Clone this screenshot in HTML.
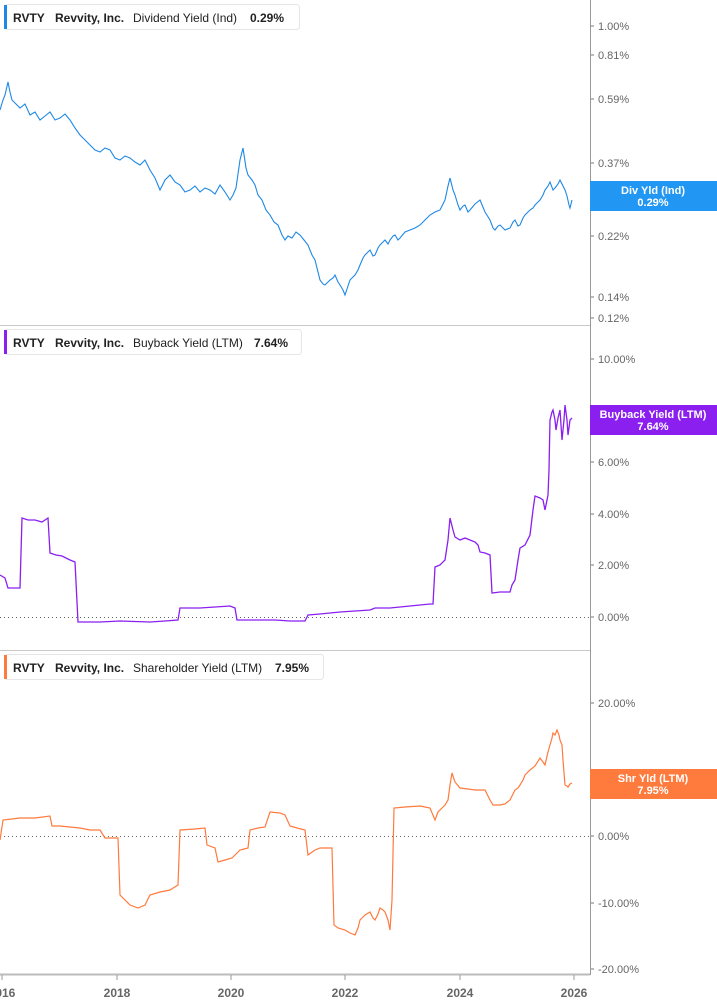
<!DOCTYPE html>
<html><head><meta charset="utf-8"><style>
html,body{margin:0;padding:0;background:#fff;}
svg{display:block;font-family:"Liberation Sans",sans-serif;}
</style></head><body>
<svg width="717" height="1005" viewBox="0 0 717 1005" xmlns="http://www.w3.org/2000/svg">
<rect width="717" height="1005" fill="#fff"/>
<line x1="0" y1="325.5" x2="590" y2="325.5" stroke="#c8c8c8"/>
<line x1="0" y1="650.5" x2="590" y2="650.5" stroke="#c8c8c8"/>
<line x1="590.5" y1="0" x2="590.5" y2="975" stroke="#999"/>
<line x1="0" y1="974.5" x2="590" y2="974.5" stroke="#bbb" stroke-width="2"/>
<g stroke="#999">
<line x1="2" y1="975" x2="2" y2="980"/><line x1="117" y1="975" x2="117" y2="980"/><line x1="231" y1="975" x2="231" y2="980"/><line x1="345" y1="975" x2="345" y2="980"/><line x1="460" y1="975" x2="460" y2="980"/><line x1="574" y1="975" x2="574" y2="980"/>
</g>
<g font-size="12" font-weight="bold" fill="#666" text-anchor="middle">
<text x="2" y="997">2016</text><text x="117" y="997">2018</text><text x="231" y="997">2020</text><text x="345" y="997">2022</text><text x="460" y="997">2024</text><text x="574" y="997">2026</text>
</g>
<line x1="0" y1="617.5" x2="590" y2="617.5" stroke="#666" stroke-dasharray="1,3"/>
<line x1="0" y1="836.5" x2="590" y2="836.5" stroke="#666" stroke-dasharray="1,3"/>
<g stroke="#777">
<line x1="591" y1="26" x2="594" y2="26"/><line x1="591" y1="55" x2="594" y2="55"/><line x1="591" y1="99" x2="594" y2="99"/><line x1="591" y1="163" x2="594" y2="163"/><line x1="591" y1="236" x2="594" y2="236"/><line x1="591" y1="297" x2="594" y2="297"/><line x1="591" y1="318" x2="594" y2="318"/>
<line x1="591" y1="359" x2="594" y2="359"/><line x1="591" y1="462" x2="594" y2="462"/><line x1="591" y1="514" x2="594" y2="514"/><line x1="591" y1="565" x2="594" y2="565"/><line x1="591" y1="617" x2="594" y2="617"/>
<line x1="591" y1="703" x2="594" y2="703"/><line x1="591" y1="836" x2="594" y2="836"/><line x1="591" y1="903" x2="594" y2="903"/><line x1="591" y1="969" x2="594" y2="969"/>
</g>
<g font-size="11" fill="#666">
<text x="598" y="30">1.00%</text><text x="598" y="59">0.81%</text><text x="598" y="103">0.59%</text><text x="598" y="167">0.37%</text><text x="598" y="240">0.22%</text><text x="598" y="301">0.14%</text><text x="598" y="322">0.12%</text>
<text x="598" y="363">10.00%</text><text x="598" y="466">6.00%</text><text x="598" y="518">4.00%</text><text x="598" y="569">2.00%</text><text x="598" y="621">0.00%</text>
<text x="598" y="707">20.00%</text><text x="598" y="840">0.00%</text><text x="598" y="907">-10.00%</text><text x="598" y="973">-20.00%</text>
</g>
<polyline fill="none" stroke="#1e88e5" stroke-width="1.1" points="0,110 3,100 5,95 8,82 10,92 12,100 16,104 20,108 25,104 30,115 35,112 40,120 45,116 50,112 55,120 60,118 65,114 70,120 75,128 80,135 85,140 90,145 95,150 100,152 105,148 110,150 115,158 120,160 125,156 130,158 135,162 140,165 145,160 150,170 155,178 160,190 165,180 170,175 175,182 180,185 185,192 190,190 195,186 200,192 205,188 210,190 215,194 220,185 225,192 230,200 233,195 236,188 240,160 243,148 246,168 248,175 252,180 255,185 258,195 262,200 266,210 270,215 274,222 278,225 282,235 285,240 288,236 292,238 296,232 300,235 304,240 308,245 312,255 315,260 318,272 320,280 323,284 325,285 328,282 330,280 333,278 335,275 338,282 340,285 343,290 345,295 348,286 350,280 353,277 355,275 358,270 360,265 363,258 365,255 368,252 370,250 373,256 375,255 378,248 380,245 383,242 385,240 388,244 390,240 393,236 395,235 398,240 400,238 405,232 410,230 415,228 420,225 425,220 430,215 435,212 440,210 443,204 445,200 448,186 450,178 453,190 455,195 458,205 460,210 463,206 465,205 468,212 470,210 475,204 480,200 485,212 490,220 493,228 495,230 498,226 500,225 505,230 510,228 513,222 515,220 518,226 520,225 523,218 525,215 528,212 530,210 533,208 535,205 538,202 540,200 543,195 545,190 548,186 550,182 553,190 555,188 558,184 560,180 563,186 565,190 567,196 569,205 570,208 572,200"/>
<polyline fill="none" stroke="#8a1ff0" stroke-width="1.3" points="0,575 5,578 8,588 20,588 22,518 28,520 35,520 42,522 48,518 50,553 56,555 62,556 70,560 75,562 78,622 100,622 120,621 150,622 165,621 178,620 180,608 200,608 230,606 235,608 237,620 260,620 275,620 290,621 305,621 308,615 320,614 340,612 355,611 370,610 375,608 390,608 410,606 430,604 433,604 435,567 440,565 445,560 448,540 450,518 453,530 455,537 460,540 465,538 470,540 475,542 478,545 480,552 485,553 490,555 492,593 500,592 510,592 512,585 515,580 518,560 520,548 525,545 530,535 533,510 535,496 540,498 543,500 545,510 548,495 549,470 550,420 552,412 553,410 555,420 556,430 558,418 560,410 561,425 562,440 564,420 565,405 567,420 568,435 570,420 572,418"/>
<polyline fill="none" stroke="#ff7a3d" stroke-width="1.2" points="0,840 3,820 20,818 35,818 50,816 52,826 60,826 70,827 80,828 90,830 100,830 105,838 118,838 120,895 125,900 130,905 138,908 145,905 150,895 160,892 170,890 178,885 180,830 195,829 205,828 207,845 215,848 218,862 225,860 232,858 236,854 240,850 248,848 250,830 258,828 265,827 270,812 280,813 285,815 290,826 297,828 305,830 308,855 315,850 320,848 332,848 334,925 338,928 345,930 350,933 355,935 358,928 360,920 365,915 370,912 373,918 375,920 378,914 380,908 383,910 385,912 388,920 390,930 392,900 394,808 405,807 420,806 430,808 435,820 438,812 440,810 445,805 448,800 450,785 452,773 455,782 460,788 468,789 475,790 480,790 485,790 488,796 490,800 493,805 500,805 505,804 510,800 513,794 515,790 518,788 520,785 523,780 525,775 528,772 530,770 535,766 540,758 543,762 545,765 548,752 550,745 552,738 553,733 555,735 557,730 559,735 560,740 562,745 563,760 565,785 567,786 568,787 570,784 572,783"/>
<rect x="590" y="181" width="127" height="30" fill="#2196f3"/>
<text x="653" y="194" font-size="11" font-weight="bold" fill="#fff" text-anchor="middle">Div Yld (Ind)</text>
<text x="653" y="206" font-size="11" font-weight="bold" fill="#fff" text-anchor="middle">0.29%</text>
<rect x="590" y="405" width="127" height="30" fill="#8a1ff0"/>
<text x="653" y="418" font-size="11" font-weight="bold" fill="#fff" text-anchor="middle">Buyback Yield (LTM)</text>
<text x="653" y="430" font-size="11" font-weight="bold" fill="#fff" text-anchor="middle">7.64%</text>
<rect x="590" y="769" width="127" height="30" fill="#ff7a3d"/>
<text x="653" y="782" font-size="11" font-weight="bold" fill="#fff" text-anchor="middle">Shr Yld (LTM)</text>
<text x="653" y="794" font-size="11" font-weight="bold" fill="#fff" text-anchor="middle">7.95%</text>
<g font-size="12" fill="#222">
<rect x="4.5" y="4.5" width="295" height="25" rx="3" fill="#fff" stroke="#e6e6e6"/>
<rect x="4" y="5" width="3" height="24" fill="#1e88e5"/>
<text x="13" y="22" font-weight="bold">RVTY</text><text x="55" y="22" font-weight="bold">Revvity, Inc.</text><text x="133" y="22">Dividend Yield (Ind)</text><text x="250" y="22" font-weight="bold">0.29%</text>
<rect x="4.5" y="329.5" width="297" height="25" rx="3" fill="#fff" stroke="#e6e6e6"/>
<rect x="4" y="330" width="3" height="24" fill="#8a1ff0"/>
<text x="13" y="347" font-weight="bold">RVTY</text><text x="55" y="347" font-weight="bold">Revvity, Inc.</text><text x="133" y="347">Buyback Yield (LTM)</text><text x="254" y="347" font-weight="bold">7.64%</text>
<rect x="4.5" y="654.5" width="319" height="25" rx="3" fill="#fff" stroke="#e6e6e6"/>
<rect x="4" y="655" width="3" height="24" fill="#ff7a3d"/>
<text x="13" y="672" font-weight="bold">RVTY</text><text x="55" y="672" font-weight="bold">Revvity, Inc.</text><text x="133" y="672">Shareholder Yield (LTM)</text><text x="275" y="672" font-weight="bold">7.95%</text>
</g>
</svg>
</body></html>
